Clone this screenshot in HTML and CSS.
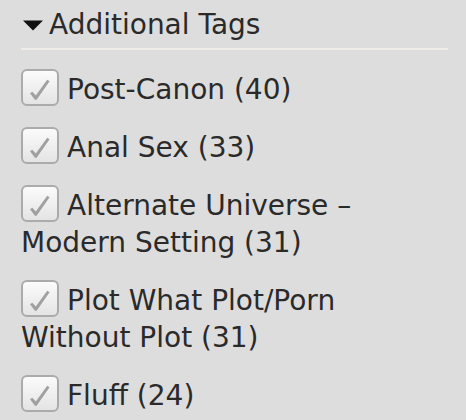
FILE: index.html
```html
<!DOCTYPE html>
<html>
<head>
<meta charset="utf-8">
<link rel="stylesheet" href="styles.css">
</head>
<body>
<div class="panel">
  <h3 class="heading"><svg class="tri" width="20" height="11" viewBox="0 0 20 11"><polygon points="0,0.5 20,0.5 10,10.5" fill="#111"/></svg>Additional Tags</h3>
  <ul class="tags">
    <li><span class="cb"><svg width="34" height="33" viewBox="0 0 34 33"><path d="M7 22.2 L9.3 20.8 L12.8 24.6 L24.2 8.8 L26.6 10.2 L13.6 28.8 L11.9 28.8 Z" fill="#a0a0a0"/></svg></span>Post-Canon (40)</li>
    <li><span class="cb"><svg width="34" height="33" viewBox="0 0 34 33"><path d="M7 22.2 L9.3 20.8 L12.8 24.6 L24.2 8.8 L26.6 10.2 L13.6 28.8 L11.9 28.8 Z" fill="#a0a0a0"/></svg></span>Anal Sex (33)</li>
    <li><span class="cb"><svg width="34" height="33" viewBox="0 0 34 33"><path d="M7 22.2 L9.3 20.8 L12.8 24.6 L24.2 8.8 L26.6 10.2 L13.6 28.8 L11.9 28.8 Z" fill="#a0a0a0"/></svg></span>Alternate Universe – Modern Setting (31)</li>
    <li><span class="cb"><svg width="34" height="33" viewBox="0 0 34 33"><path d="M7 22.2 L9.3 20.8 L12.8 24.6 L24.2 8.8 L26.6 10.2 L13.6 28.8 L11.9 28.8 Z" fill="#a0a0a0"/></svg></span>Plot What Plot/Porn Without Plot (31)</li>
    <li><span class="cb"><svg width="34" height="33" viewBox="0 0 34 33"><path d="M7 22.2 L9.3 20.8 L12.8 24.6 L24.2 8.8 L26.6 10.2 L13.6 28.8 L11.9 28.8 Z" fill="#a0a0a0"/></svg></span>Fluff (24)</li>
  </ul>
</div>
</body>
</html>
```
FILE: styles.css
```css
html, body {
  margin: 0;
  padding: 0;
  background: #dddddd;
}
body {
  font-family: "DejaVu Sans", Verdana, sans-serif;
  font-size: 28px;
  color: #2a2a2a;
}
.panel {
  width: 427px;
  margin-left: 21px;
  padding-top: 6px;
}
.heading {
  margin: 0;
  font-weight: normal;
  font-size: 28px;
  line-height: 37px;
  padding-bottom: 5px;
  border-bottom: 2px solid #efebe7;
  display: flex;
  align-items: center;
}
.tri {
  margin-left: 2px;
  margin-right: 6px;
  margin-top: 2px;
}
.tags {
  list-style: none;
  margin: 19px 0 0 0;
  padding: 0;
}
.tags li {
  line-height: 37px;
  margin-bottom: 19px;
}
.cb {
  display: inline-block;
  box-sizing: border-box;
  width: 38px;
  height: 37px;
  border: 2px solid #ababab;
  border-radius: 6px;
  background: linear-gradient(#fbfbfb, #e4e4e4);
  vertical-align: -7px;
  margin-right: 8px;
}
.cb svg {
  display: block;
}
```
